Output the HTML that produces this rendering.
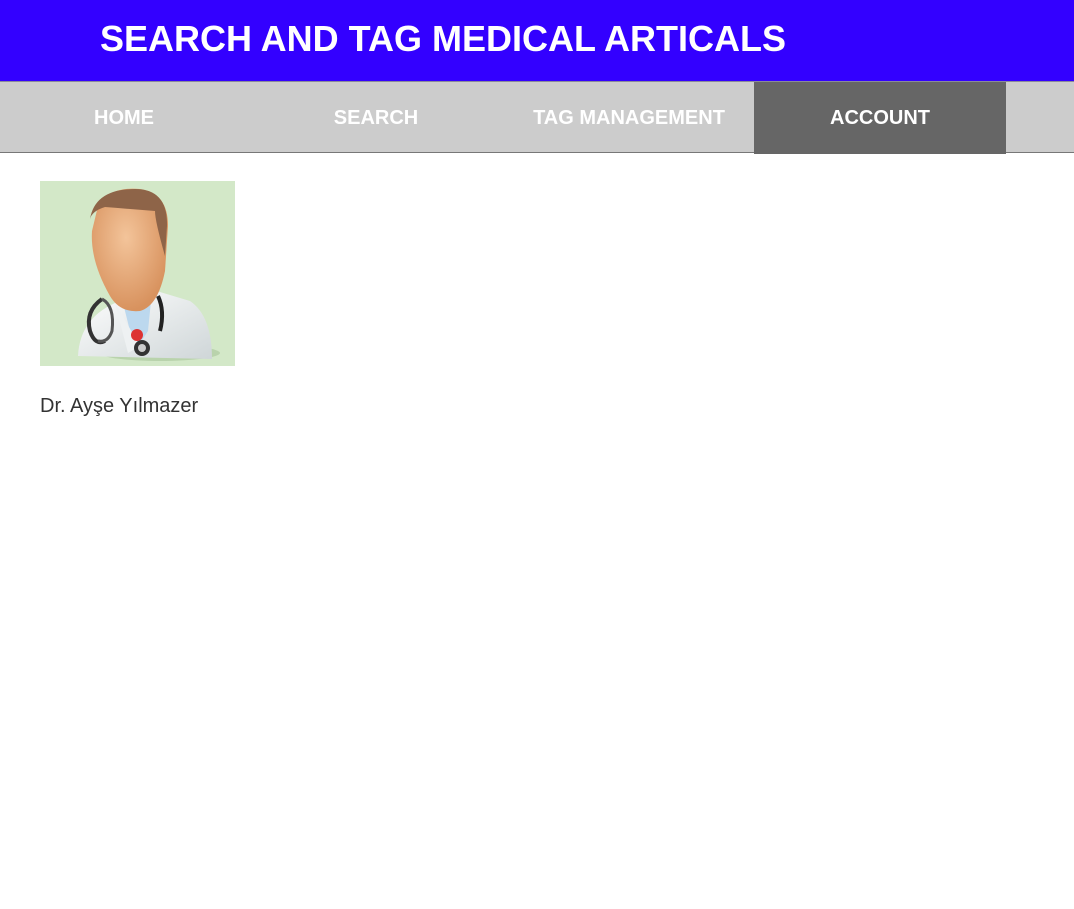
<!DOCTYPE html>
<html><head><meta charset="utf-8"><style>
*{margin:0;padding:0;box-sizing:border-box}
body{width:1074px;height:909px;background:#fff;font-family:"Liberation Sans",Arial,sans-serif;overflow:hidden;position:relative}
.hdr{position:absolute;left:0;top:0;width:1074px;height:81px;background:#3300ff}
.hdr h1{position:absolute;left:100px;top:19px;color:#fff;font-size:36px;font-weight:bold;line-height:40px;letter-spacing:0}
.line{position:absolute;left:0;top:81px;width:1074px;height:1px;background:#8a8a9a}
.nav{position:absolute;left:0;top:82px;width:1074px;height:71px;background:#ccc;border-bottom:1px solid #777}
.nav div{position:absolute;top:0;height:71px;width:252px;text-align:center;line-height:72px;color:#fff;font-weight:bold;font-size:20px}
.nav .act{background:#666;height:72px}
.pic{position:absolute;left:40px;top:181px;width:195px;height:185px;background:#d3e8c8;overflow:hidden}
.name{position:absolute;left:40px;top:395px;font-size:20px;color:#333}
</style></head><body>
<div class="hdr"><h1>SEARCH AND TAG MEDICAL ARTICALS</h1></div>
<div class="line"></div>
<div class="nav">
<div style="left:-2px">HOME</div>
<div style="left:250px">SEARCH</div>
<div style="left:503px">TAG MANAGEMENT</div>
<div class="act" style="left:754px">ACCOUNT</div>
</div>
<div class="pic">
<svg width="195" height="185" viewBox="0 0 195 185">
<defs>
<radialGradient id="f" cx="0.45" cy="0.4" r="0.6"><stop offset="0" stop-color="#f3c49a"/><stop offset="1" stop-color="#d8925e"/></radialGradient>
<linearGradient id="c" x1="0" y1="0" x2="1" y2="1"><stop offset="0" stop-color="#fff"/><stop offset="1" stop-color="#cfd6d8"/></linearGradient>
</defs>
<ellipse cx="120" cy="172" rx="60" ry="8" fill="#a9c49a" opacity="0.6"/>
<path d="M38 175 Q40 135 80 120 L110 108 L150 120 Q172 135 172 178 Z" fill="url(#c)"/>
<path d="M82 118 L112 110 L108 150 L95 170 Z" fill="#bcd8ee"/>
<path d="M75 122 L100 165 L88 172 Z" fill="#eef1f2"/>
<path d="M58 25 Q70 5 100 8 Q128 12 128 45 L125 90 Q118 125 100 130 Q80 132 70 115 Q50 80 52 50 Z" fill="url(#f)"/>
<path d="M50 38 Q55 8 95 8 Q128 8 127 45 L125 75 Q115 40 115 30 Q90 28 65 26 Q52 30 50 38 Z" fill="#8e6448"/>
<path d="M118 115 Q125 130 120 150" stroke="#222" stroke-width="4" fill="none"/>
<path d="M62 118 Q45 130 50 150 Q55 165 65 160" stroke="#333" stroke-width="4" fill="none"/>
<path d="M62 118 Q75 125 72 150 Q68 162 58 160" stroke="#555" stroke-width="3" fill="none"/>
<circle cx="102" cy="167" r="8" fill="#333"/><circle cx="102" cy="167" r="4" fill="#ccc"/>
<circle cx="97" cy="154" r="6" fill="#d33"/>
</svg>
</div>
<div class="name">Dr. Ayşe Yılmazer</div>
</body></html>
